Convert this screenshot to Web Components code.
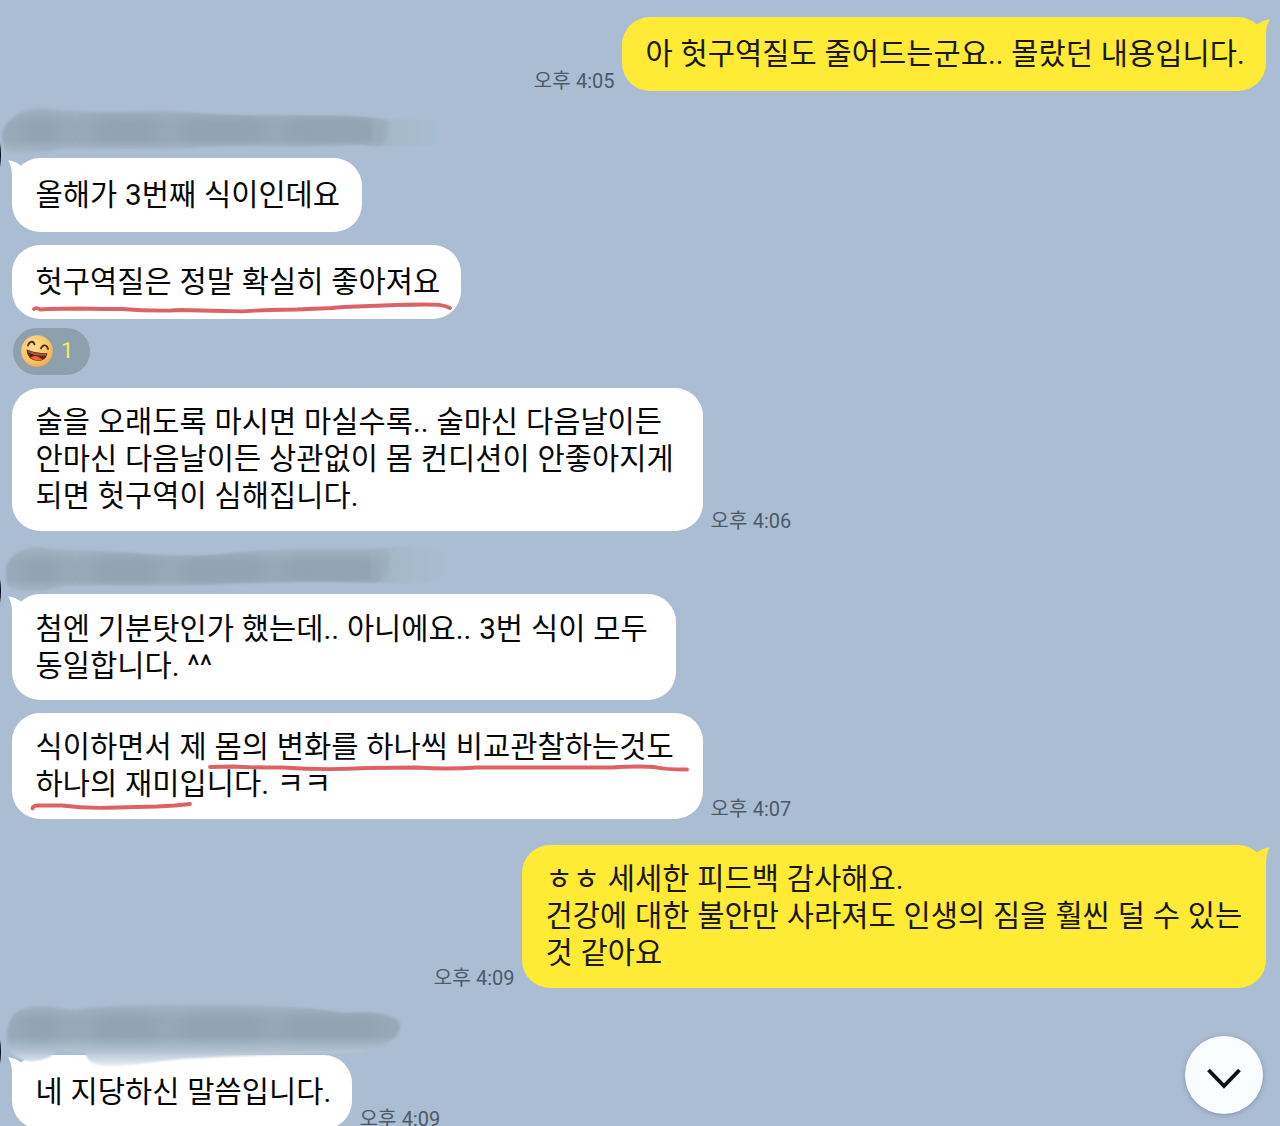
<!DOCTYPE html>
<html lang="ko">
<head>
<meta charset="utf-8">
<title>채팅</title>
<style>
  html, body {
    margin: 0;
    height: 1126px;
    overflow: hidden;
  }
  body {
    background: #abbdd3;
    font-family: Roboto, "Noto Sans CJK KR", sans-serif;
  }
</style>
</head>
<body>
<chat-room>
  <chat-message side="me" time="오후 4:05" width="644" style="--gap: 17px">아 헛구역질도 줄어드는군요.. 몰랐던 내용입니다.</chat-message>

  <hidden-name variant="a"></hidden-name>
  <chat-message tail width="349.5">올해가 3번째 식이인데요</chat-message>
  <chat-message width="449" style="--gap: 13px">헛구역질은 정말 확실히 좋아져요
    <pen-mark slot="mark" d="M22 64 Q25 62 28 64.5 L36 64 L68 63.5 Q90 64 110 64 Q135 66 159 65.5 L168 65 Q200 66 230 66.3 L257 65 L285 64.5 L320 63 L331 62 L385 60 Q420 59 428 60 Q434 61 438 63"></pen-mark>
  </chat-message>
  <reaction-pill count="1"></reaction-pill>
  <chat-message time="오후 4:06" width="691" style="--gap: 12.5px">술을 오래도록 마시면 마실수록.. 술마신 다음날이든<br>안마신 다음날이든 상관없이 몸 컨디션이 안좋아지게<br>되면 헛구역이 심해집니다.</chat-message>

  <hidden-name variant="b"></hidden-name>
  <chat-message tail width="664">첨엔 기분탓인가 했는데.. 아니에요.. 3번 식이 모두<br>동일합니다. ^^</chat-message>
  <chat-message time="오후 4:07" width="691" style="--gap: 12.5px">식이하면서 제 몸의 변화를 하나씩 비교관찰하는것도<br>하나의 재미입니다. ㅋㅋ
    <pen-mark slot="mark" d="M198 54 L220 53.5 Q240 54.5 270 54.5 Q315 57.5 355 55 L405 54.5 Q435 56.5 465 54.5 L600 54.5 Q630 52.5 645 54.5 Q653 56.5 675 56.5"></pen-mark>
    <pen-mark slot="mark" d="M20.5 95.5 Q21 92.5 26 92.5 L50 92.5 Q75 96 105 94.5 L145 93.5 L163 92.5 L178 91"></pen-mark>
  </chat-message>

  <chat-message side="me" time="오후 4:09" width="744" style="--gap: 26px">ㅎㅎ 세세한 피드백 감사해요.<br>건강에 대한 불안만 사라져도 인생의 짐을 훨씬 덜 수 있는<br>것 같아요</chat-message>

  <hidden-name variant="c"></hidden-name>
  <chat-message tail time="오후 4:09" width="340">네 지당하신 말씀입니다.</chat-message>

  <scroll-button slot="floating"></scroll-button>
</chat-room>

<script>
class ChatRoom extends HTMLElement {
  constructor() {
    super();
    this.attachShadow({ mode: 'open' }).innerHTML = `
      <style>
        :host {
          display: block;
          position: relative;
          height: 1126px;
          overflow: hidden;
        }
        .list {
          display: flex;
          flex-direction: column;
          padding: 0 14px 0 12px;
        }
        .floating {
          position: absolute;
          right: 17px;
          bottom: 12px;
          z-index: 3;
        }
      </style>
      <div class="list"><slot></slot></div>
      <div class="floating"><slot name="floating"></slot></div>
    `;
  }
}

class ChatMessage extends HTMLElement {
  connectedCallback() {
    const mine = this.getAttribute('side') === 'me';
    const time = this.getAttribute('time');
    const tail = mine || this.hasAttribute('tail');

    this.attachShadow({ mode: 'open' }).innerHTML = `
      <style>
        :host {
          display: flex;
          flex-direction: ${mine ? 'row-reverse' : 'row'};
          align-items: flex-end;
          gap: 7.5px;
          margin-top: var(--gap, 0);
        }
        .bubble {
          position: relative;
          box-sizing: border-box;
          display: flex;
          align-items: center;
          width: ${this.getAttribute('width')}px;
          min-height: 74px;
          padding: 16.5px 0 15.5px 23.5px;
          border-radius: 28px;
          background: ${mine ? '#ffea35' : '#fff'};
          color: ${mine ? '#1a1708' : '#080808'};
          font-size: 29.6px;
          line-height: 37px;
          word-spacing: .5px;
          white-space: nowrap;
        }
        .tail {
          position: absolute;
          top: 0;
          ${mine ? 'right: -4px; transform: scaleX(-1);' : 'left: -4px;'}
          width: 30px;
          height: 30px;
        }
        time {
          margin-bottom: -1px;
          color: #4c5a69;
          font-size: 20px;
          line-height: 22px;
          word-spacing: .4px;
          white-space: nowrap;
        }
      </style>
      <div class="bubble">
        ${tail ? `<svg class="tail" viewBox="0 0 30 30"><path d="M.2 2.2Q7.5 3 13.2 7.8L20 12V29H4V19Q4 8 .2 2.2Z" fill="${mine ? '#ffea35' : '#fff'}"/></svg>` : ''}
        <div class="text"><slot></slot></div>
        <slot name="mark"></slot>
      </div>
      ${time ? `<time>${time}</time>` : ''}
    `;
  }
}

// Hand-drawn underline, laid over the bubble it is slotted into
class PenMark extends HTMLElement {
  connectedCallback() {
    this.attachShadow({ mode: 'open' }).innerHTML = `
      <style>
        :host {
          position: absolute;
          inset: 0;
          pointer-events: none;
        }
        svg {
          display: block;
          width: 100%;
          height: 100%;
          overflow: visible;
        }
      </style>
      <svg><path d="${this.getAttribute('d')}" fill="none" stroke="#dc6268" stroke-width="3.8" stroke-linecap="round" stroke-linejoin="round"/></svg>
    `;
  }
}

class ReactionPill extends HTMLElement {
  connectedCallback() {
    this.attachShadow({ mode: 'open' }).innerHTML = `
      <style>
        :host {
          display: flex;
          align-items: center;
          box-sizing: border-box;
          gap: 8px;
          width: 77px;
          height: 47.5px;
          margin: 8.5px 0 0 1px;
          padding: 0 0 1px 8px;
          border-radius: 24px;
          background: #8e9fae;
          color: #f3ec5c;
          font-size: 22px;
          line-height: 24px;
        }
        svg {
          width: 32px;
          height: 32px;
        }
      </style>
      <svg viewBox="0 0 32 32">
        <defs>
          <radialGradient id="face" cx=".4" cy=".35" r=".7">
            <stop offset="0" stop-color="#ffdf91"/>
            <stop offset=".65" stop-color="#fac568"/>
            <stop offset="1" stop-color="#efaa4c"/>
          </radialGradient>
        </defs>
        <circle cx="16" cy="16" r="15.8" fill="url(#face)"/>
        <path d="M7 10.5C8 6 12.5 5.5 13.5 9.5M20 13.5C21.5 9 26 9.5 27 14" fill="none" stroke="#542b18" stroke-width="1.8" stroke-linecap="round"/>
        <path d="M5.5 14.5Q16 19 26.5 18Q25 26 17 26Q6 25 5.5 14.5Z" fill="#612513"/>
        <path d="M7 15.5Q16 19.5 25.5 18.7L25 20.5Q15 21.5 7.5 17.5Z" fill="#9b5c3a"/>
        <path d="M9.5 22.5Q15 18.5 21.5 24.8Q15 27.5 9.5 22.5Z" fill="#f0642f"/>
      </svg>
      <span>${this.getAttribute('count')}</span>
    `;
  }
}

// Sender name smeared over with a brush
class HiddenName extends HTMLElement {
  static shapes = {
    a: {
      height: 67,
      body: 'M2 45C2 28 25 14 45 16C80 21 120 20 165 19C200 21 230 24 270 23C310 24 350 22 385 27C392 34 390 50 376 55C365 52 350 53 330 54C290 56 240 53 200 55C160 59 100 55 60 57C45 60 20 66 8 60C3 56 2 50 2 45Z',
      end: 'M380 28L437 27L438 54L376 54Z',
      sliver: 51,
    },
    b: {
      height: 63.5,
      body: 'M6 40C6 25 20 14 40 15C60 19 100 18 135 21C170 24 200 25 240 20C290 16 340 17 387 16C395 30 390 45 376 51C330 49 270 50 230 52C170 55 100 52 62 54C45 61 15 61 8 54C5 50 6 45 6 40Z',
      end: 'M375 17C410 13 430 17 447 20C452 30 446 45 440 48C415 54 390 52 375 49Z',
      sliver: 47,
    },
    c: {
      height: 67,
      body: 'M7 48C7 30 15 18 38 17C55 16 65 22 80 20C120 14 180 16 230 16C270 16 310 18 345 24C370 21 397 25 400 35C402 48 385 60 355 64C310 64 230 67 180 70C145 74 110 80 95 75C85 71 88 65 84 63L57 62C45 74 25 75 16 67C8 64 7 56 7 48Z',
      end: '',
      sliver: 51,
    },
  };

  connectedCallback() {
    const shape = HiddenName.shapes[this.getAttribute('variant')];

    this.attachShadow({ mode: 'open' }).innerHTML = `
      <style>
        :host {
          display: block;
          position: relative;
          z-index: 1;
          box-sizing: border-box;
          height: ${shape.height}px;
          margin-left: -12px;
          padding-top: 1px;
        }
        svg {
          display: block;
          width: 480px;
          height: 80px;
          overflow: visible;
        }
      </style>
      <svg viewBox="0 0 480 80">
        <defs>
          <filter id="soft" x="-5%" y="-20%" width="110%" height="140%"><feGaussianBlur stdDeviation="1.3"/></filter>
          <filter id="wide" x="-20%" y="-50%" width="140%" height="200%"><feGaussianBlur stdDeviation="9 6"/></filter>
          <linearGradient id="tone" x2="0" y2="80" gradientUnits="userSpaceOnUse">
            <stop offset=".15" stop-color="#a5b7c8"/>
            <stop offset=".38" stop-color="#98aaba"/>
            <stop offset=".6" stop-color="#98aaba"/>
            <stop offset=".78" stop-color="${shape.end ? '#adbac8' : '#b3c2d2'}"/>
            <stop offset=".95" stop-color="${shape.end ? '#bac4ce' : '#e4ebf2'}"/>
          </linearGradient>
          <linearGradient id="fade">
            <stop offset="0" stop-color="#9eb1c0"/>
            <stop offset=".35" stop-color="#a5bacb"/>
            <stop offset="1" stop-color="#a8bdd0"/>
          </linearGradient>
          <linearGradient id="blend" x1="0" x2="480" gradientUnits="userSpaceOnUse">
            <stop offset=".77" stop-color="#fff"/>
            <stop offset=".825" stop-color="#000"/>
          </linearGradient>
          <mask id="edge"><rect x="-10" y="-10" width="500" height="110" fill="${shape.end ? 'url(#blend)' : '#fff'}"/></mask>
          <clipPath id="clip"><path d="${shape.body}"/></clipPath>
        </defs>
        ${shape.end ? `<path d="${shape.end}" fill="url(#fade)" filter="url(#soft)"/>` : ''}
        <g mask="url(#edge)">
          <path d="${shape.body}" fill="url(#tone)" filter="url(#soft)"/>
          <g clip-path="url(#clip)">
            <g fill="#8599a9" opacity=".35" filter="url(#wide)">
              <rect x="26" y="24" width="30" height="28"/>
              <rect x="96" y="24" width="60" height="28"/>
              <rect x="182" y="24" width="80" height="26"/>
              <rect x="285" y="25" width="92" height="24"/>
            </g>
          </g>
        </g>
        <path d="M0 ${shape.sliver}Q2 ${shape.sliver + 12} 0 ${shape.sliver + 24}Z" fill="#0a0d18"/>
      </svg>
    `;
  }
}

class ScrollButton extends HTMLElement {
  connectedCallback() {
    this.attachShadow({ mode: 'open' }).innerHTML = `
      <style>
        :host {
          display: block;
        }
        button {
          display: grid;
          place-items: center;
          width: 78px;
          height: 78px;
          padding: 0;
          border: 0;
          border-radius: 50%;
          background: #fafdff;
          box-shadow: 0 1px 5px rgba(70, 90, 110, .4);
        }
      </style>
      <button aria-label="아래로">
        <svg width="78" height="78" viewBox="0 0 78 78"><path d="M23.5 34L39 50L54.5 34" fill="none" stroke="#101214" stroke-width="3.8"/></svg>
      </button>
    `;
  }
}

customElements.define('chat-room', ChatRoom);
customElements.define('chat-message', ChatMessage);
customElements.define('pen-mark', PenMark);
customElements.define('reaction-pill', ReactionPill);
customElements.define('hidden-name', HiddenName);
customElements.define('scroll-button', ScrollButton);
</script>
</body>
</html>
